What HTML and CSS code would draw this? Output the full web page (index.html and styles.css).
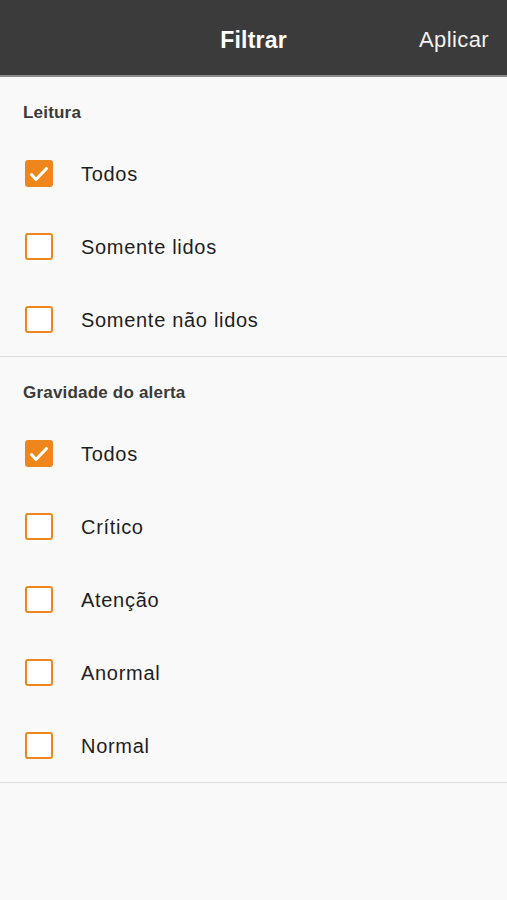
FILE: index.html
```html
<!DOCTYPE html>
<html lang="pt">
<head>
    <meta charset="UTF-8">
    <meta name="viewport" content="width=device-width, initial-scale=1.0">
    <title>Filtrar</title>
    <link rel="stylesheet" href="styles.css">
</head>
<body>
    <header class="nav-bar">
        <span class="nav-side"></span>
        <h1 class="nav-title">Filtrar</h1>
        <span class="nav-side nav-action">Aplicar</span>
    </header>

    <div class="section">
        <h2 class="section-label">Leitura</h2>
        <div class="option">
            <span class="check checked">
                <svg viewBox="0 0 28 27"><polyline points="6.5,14.5 11,19.5 21.5,8.5"/></svg>
            </span>
            <span class="option-text">Todos</span>
        </div>
        <div class="option">
            <span class="check"></span>
            <span class="option-text">Somente lidos</span>
        </div>
        <div class="option">
            <span class="check"></span>
            <span class="option-text">Somente não lidos</span>
        </div>
    </div>

    <div class="section">
        <h2 class="section-label">Gravidade do alerta</h2>
        <div class="option">
            <span class="check checked">
                <svg viewBox="0 0 28 27"><polyline points="6.5,14.5 11,19.5 21.5,8.5"/></svg>
            </span>
            <span class="option-text">Todos</span>
        </div>
        <div class="option">
            <span class="check"></span>
            <span class="option-text">Crítico</span>
        </div>
        <div class="option">
            <span class="check"></span>
            <span class="option-text">Atenção</span>
        </div>
        <div class="option">
            <span class="check"></span>
            <span class="option-text">Anormal</span>
        </div>
        <div class="option">
            <span class="check"></span>
            <span class="option-text">Normal</span>
        </div>
    </div>
</body>
</html>
```

FILE: styles.css
```css
body {
    margin: 0;
    min-height: 900px;
    background-color: #f9f9f9;
    font-family: "Liberation Sans", Arial, Helvetica, sans-serif;
    color: #222;
}

.nav-bar {
    height: 77px;
    box-sizing: border-box;
    display: flex;
    align-items: center;
    padding: 5px 18px 0;
    background-color: #3b3b3b;
    border-bottom: 2px solid #8a8a8a;
}

.nav-side {
    flex: 1;
}

.nav-title {
    margin: 0;
    font-size: 23px;
    font-weight: bold;
    color: #fff;
    letter-spacing: 0.2px;
}

.nav-action {
    text-align: right;
    font-size: 22px;
    color: #f2f2f2;
    letter-spacing: 0.4px;
}

.section {
    border-bottom: 1px solid #dcdcdc;
}

.section-label {
    margin: 0;
    height: 60px;
    box-sizing: border-box;
    padding: 27px 0 0 23px;
    font-size: 17px;
    line-height: 18px;
    font-weight: bold;
    letter-spacing: 0.2px;
    color: #3a3a3a;
}

.option {
    height: 73px;
    display: flex;
    align-items: center;
    padding-left: 25px;
    gap: 28px;
}

.check {
    width: 28px;
    height: 27px;
    box-sizing: border-box;
    border: 2.5px solid #ef861b;
    border-radius: 3px;
    background-color: #fff;
    display: flex;
}

.check.checked {
    background-color: #ef861b;
}

.check svg {
    width: 28px;
    height: 27px;
    margin: -2.5px;
}

.check svg polyline {
    fill: none;
    stroke: #fff;
    stroke-width: 3;
    stroke-linecap: round;
    stroke-linejoin: round;
}

.option-text {
    padding-top: 2px;
    font-size: 20px;
    letter-spacing: 0.7px;
    color: #1e1e1e;
}
```
